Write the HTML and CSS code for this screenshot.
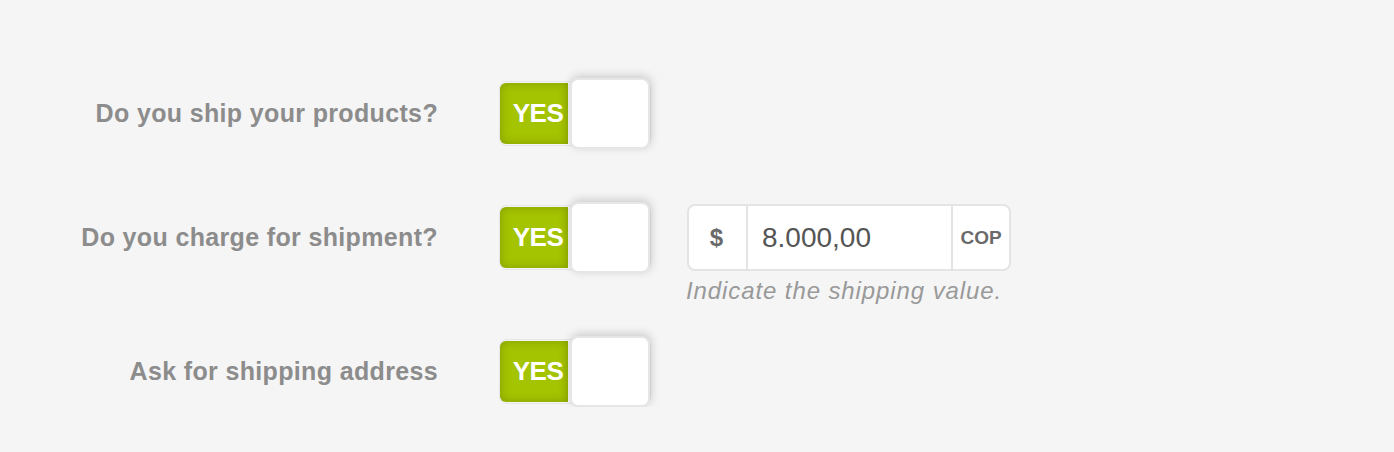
FILE: index.html
```html
<!DOCTYPE html>
<html>
<head>
<meta charset="utf-8">
<link rel="stylesheet" href="styles.css">
</head>
<body>
<form class="form">
  <div class="row row-first">
    <label class="label">Do you ship your products?</label>
    <div class="switch">
      <span class="switch-on">YES</span>
      <span class="switch-knob"></span>
    </div>
  </div>
  <div class="row row-second">
    <label class="label">Do you charge for shipment?</label>
    <div class="switch">
      <span class="switch-on">YES</span>
      <span class="switch-knob"></span>
    </div>
    <div class="field">
      <div class="input-group">
        <span class="addon addon-left">$</span>
        <span class="input">8.000,00</span>
        <span class="addon addon-right">COP</span>
      </div>
      <p class="help">Indicate the shipping value.</p>
    </div>
  </div>
  <div class="row row-third">
    <label class="label">Ask for shipping address</label>
    <div class="switch">
      <span class="switch-on">YES</span>
      <span class="switch-knob"></span>
    </div>
  </div>
</form>
</body>
</html>
```
FILE: styles.css
```css
html, body {
  margin: 0;
  padding: 0;
  background: #f5f5f5;
  font-family: "Liberation Sans", Arial, sans-serif;
}
.form {
  display: flex;
  flex-direction: column;
  padding-top: 78px;
}
.row {
  display: flex;
  align-items: flex-start;
}
.row-first { margin-bottom: 53px; }
.row-second { margin-bottom: 31px; }
.label {
  width: 438px;
  flex: none;
  text-align: right;
  font-size: 25px;
  letter-spacing: 0.35px;
  font-weight: bold;
  color: #8c8c8c;
  line-height: 71px;
  height: 71px;
  white-space: nowrap;
}
.switch {
  margin-left: 61px;
  margin-top: 3px;
  display: flex;
  align-items: center;
  height: 63px;
  width: 150px;
  border: 1px solid #e6e6e6;
  border-radius: 7px;
  box-sizing: content-box;
  flex: none;
}
.switch-on {
  width: 69px;
  height: 61px;
  background: #a4c300;
  box-shadow: inset 0 0 10px rgba(60,70,0,0.3);
  border-radius: 6px 0 0 6px;
  color: #fff;
  font-weight: bold;
  font-size: 26px;
  letter-spacing: -0.5px;
  display: flex;
  align-items: center;
  justify-content: center;
  padding-left: 8px;
  box-sizing: border-box;
}
.switch-knob {
  margin-left: 2px;
  width: 80px;
  height: 71px;
  flex: none;
  box-sizing: border-box;
  background: #fff;
  border: 2px solid #e6e6e6;
  border-radius: 8px;
  box-shadow: 1px -2px 10px rgba(0,0,0,0.18);
}
.field {
  margin-left: 36px;
  margin-top: 2px;
  display: flex;
  flex-direction: column;
}
.input-group {
  display: flex;
  width: 324px;
  height: 67px;
  box-sizing: border-box;
  border: 2px solid #e4e4e4;
  border-radius: 8px;
  background: #fff;
}
.addon {
  display: flex;
  align-items: center;
  justify-content: center;
  font-weight: bold;
  color: #6a6a6a;
  box-sizing: border-box;
}
.addon-left {
  width: 59px;
  font-size: 24px;
  border-right: 2px solid #e4e4e4;
  padding-right: 2px;
}
.addon-right {
  width: 58px;
  font-size: 19px;
  border-left: 2px solid #e4e4e4;
}
.input {
  flex: 1;
  display: flex;
  align-items: center;
  padding-left: 14px;
  font-size: 28px;
  color: #555;
}
.help {
  margin: 6px 0 0 -1px;
  font-style: italic;
  font-size: 24px;
  letter-spacing: 0.9px;
  color: #999;
  white-space: nowrap;
}
```
